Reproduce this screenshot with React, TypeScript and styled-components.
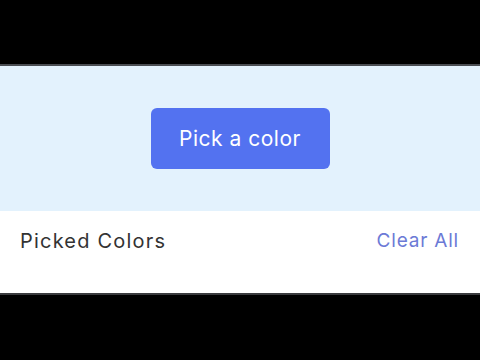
import styled, { createGlobalStyle } from "styled-components";

const GlobalStyle = createGlobalStyle`
  html, body {
    margin: 0;
    padding: 0;
    background: #000;
    font-family: "Inter", "Noto Sans", sans-serif;
  }
`;

const Screen = styled.div`
  width: 480px;
  height: 360px;
  display: flex;
  flex-direction: column;
  background: #000;
  padding-top: 64px;
  box-sizing: border-box;
`;

const Panel = styled.div`
  display: flex;
  flex-direction: column;
  border-top: 2px solid #4a4d52;
  border-bottom: 2px solid #3a3b3e;
`;

const PickerArea = styled.div`
  height: 145px;
  display: flex;
  align-items: center;
  justify-content: center;
  background: #e3f2fd;
`;

const PickButton = styled.button`
  width: 179px;
  height: 61px;
  border: none;
  border-radius: 6px;
  background: #5372f0;
  color: #fff;
  font-family: "Inter", "Noto Sans", sans-serif;
  font-size: 21px;
  font-weight: 400;
  letter-spacing: 0.5px;
  cursor: pointer;
`;

const ListHeader = styled.div`
  height: 82px;
  display: flex;
  align-items: flex-start;
  justify-content: space-between;
  padding: 18px 21px 0 20px;
  box-sizing: border-box;
  background: #fff;
`;

const Title = styled.span`
  font-size: 20px;
  color: #333;
  letter-spacing: 1.2px;
`;

const ClearLink = styled.span`
  font-size: 19px;
  color: #6c7ad6;
  letter-spacing: 0.8px;
  cursor: pointer;
`;

export default function App() {
  return (
    <>
      <GlobalStyle />
      <Screen>
        <Panel>
          <PickerArea>
            <PickButton>Pick a color</PickButton>
          </PickerArea>
          <ListHeader>
            <Title>Picked Colors</Title>
            <ClearLink>Clear All</ClearLink>
          </ListHeader>
        </Panel>
      </Screen>
    </>
  );
}
